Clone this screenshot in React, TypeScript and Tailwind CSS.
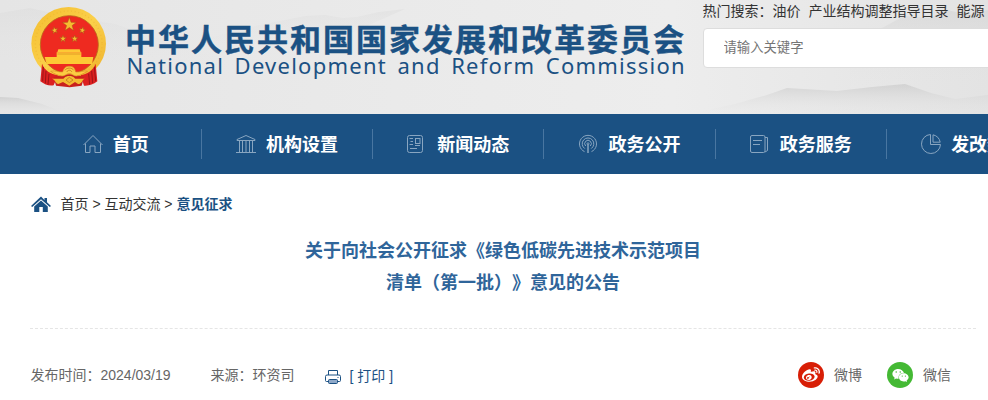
import type { ReactNode } from 'react';
import { FaWeibo, FaWeixin } from 'react-icons/fa';

interface NavItem {
  label: string;
  icon: ReactNode;
}

const star = (cx: number, cy: number, r: number, turn = 0) => {
  const points: string[] = [];
  for (let i = 0; i < 10; i++) {
    const radius = i % 2 === 0 ? r : r * 0.4;
    const angle = (i * 36 - 90 + turn) * (Math.PI / 180);
    points.push(`${(cx + radius * Math.cos(angle)).toFixed(1)},${(cy + radius * Math.sin(angle)).toFixed(1)}`);
  }
  return points.join(' ');
};

const navItems: NavItem[] = [
  {
    label: '首页',
    icon: <path d="M.5 11 10 1.5 19.5 11M2.500 9.500v9h4.500V12h5v6.500h5.500v-9" />,
  },
  {
    label: '机构设置',
    icon: <path d="M1 5.500 10 1.500l9 4v1H1zM3.500 7v11M6.500 7v11M10 7v11M13.500 7v11M16.500 7v11M0 18.500h20" />,
  },
  {
    label: '新闻动态',
    icon: (
      <>
        <rect x=".5" y="1.500" width="15" height="17" rx="2" />
        <rect x="8.500" y="4.500" width="4.500" height="5" />
        <path d="M2.500 4.500h3.500M3.500 7.500H6M2.500 10.500H6M8 11.500h5M3 14.500h7" />
      </>
    ),
  },
  {
    label: '政务公开',
    icon: (
      <>
        <path d="M5.500 17.600a8.500 8.500 0 1 1 7 0" />
        <path d="M5.800 14.600a5.800 5.800 0 1 1 6.400 0M6.700 12a3.300 3.300 0 1 1 4.600 0" />
        <circle cx="9" cy="9.800" r="1" />
        <path d="M9 10.500V19" strokeWidth="1.500" />
      </>
    ),
  },
  {
    label: '政务服务',
    icon: (
      <>
        <rect x=".5" y="1.500" width="14.500" height="17" rx="1.500" />
        <path d="M3 6.500h9M3 10.500h7M15 3.500h2.500v13L15 18" />
      </>
    ),
  },
  {
    label: '发改数据',
    icon: (
      <>
        <path d="M9.500.5a9.500 9.500 0 1 0 10 10h-10z" />
        <path d="M12 .8a9.500 9.500 0 0 1 7.200 7.400H12z" />
      </>
    ),
  },
];

function Emblem() {
  return (
    <svg className="h-[84px] w-[78px] shrink-0" viewBox="30 15 234 252">
      <defs>
        <linearGradient id="gold" x1="0" y1="0" x2="1" y2="1">
          <stop offset="0" stopColor="#f3bd2f" />
          <stop offset=".5" stopColor="#fbd04a" />
          <stop offset="1" stopColor="#eeb02a" />
        </linearGradient>
      </defs>
      <ellipse cx="146" cy="131" rx="112" ry="110" fill="url(#gold)" />
      <ellipse cx="146" cy="131" rx="100" ry="98" fill="none" stroke="#e5a324" strokeWidth="4" strokeDasharray="3 8" opacity=".3" />
      <circle cx="148" cy="134" r="87" fill="#ee2a20" stroke="#b9691b" strokeWidth="2.500" />
      <g fill="#f5bb31" stroke="#a94a16" strokeWidth="1.500">
        <polygon points={star(148, 74, 22)} />
        <polygon points={star(104, 91, 11, -12)} />
        <polygon points={star(187, 91, 11, 12)} />
        <polygon points={star(129, 116, 11)} />
        <polygon points={star(164, 116, 11)} />
      </g>
      <g fill="#fdc935">
        <path d="M115 148h64l3 9h-70z" />
        <path d="M110 157h74v14h36l-4 21H80l-6-21h36z" />
      </g>
      <path d="M112 162h70" stroke="#d68422" strokeWidth="2" />
      <path d="M66 191c7 20 27 32 48 34l-13 31c-15 2-27-2-40-12z" fill="#dc2020" />
      <path d="M227 191c-7 20-27 32-45 34l10 32c15 1 27-3 40-13z" fill="#dc2020" />
      <path d="M70 201l-2 43m10-31-2 37m11-28-3 32m139-53 4 43m-12-31 3 36m-12-28 3 33" stroke="#9e1518" strokeWidth="3" fill="none" />
      <path d="M101 232c30-12 66-12 91 0l-7 25-36 5-41-5z" fill="#c9211d" />
      <path d="M96 236h34c3 0 4-8 18-8s16 8 18 8h28c-8 2-7 16-20 16l-9-6-17 11-19-11-14 6c-8-2-9-12-19-16z" fill="#f4bb32" />
      <path d="M92 214c14-4 23 3 36 2 5-15 11-17 20-17s16 3 19 17c14 2 23-6 36-2-12 5-22 14-34 14-10 0-11-7-21-7s-12 7-22 7-24-7-34-14z" fill="#fccc43" stroke="#d98e24" strokeWidth="2" />
      <path d="M135 211c4-9 22-9 26 0M140 216c4-7 12-7 16 0M138 240l10-8 11 8-11 8z" fill="none" stroke="#c77a20" strokeWidth="2.500" />
    </svg>
  );
}

function Mountains() {
  return (
    <svg className="absolute inset-0 h-full w-full" viewBox="0 0 988 114" preserveAspectRatio="none">
      <defs>
        <linearGradient id="sky" x1="0" y1="0" x2="1" y2="0">
          <stop offset="0" stopColor="#e5e5e5" />
          <stop offset=".4" stopColor="#eaeaea" />
          <stop offset=".68" stopColor="#ededed" />
          <stop offset="1" stopColor="#e3e3e3" />
        </linearGradient>
        <linearGradient id="ridge" x1="0" y1="0" x2="0" y2="1">
          <stop offset="0" stopColor="#c9c9c9" stopOpacity=".7" />
          <stop offset="1" stopColor="#e6e6e6" stopOpacity="0" />
        </linearGradient>
      </defs>
      <path fill="url(#sky)" d="M0 0h988v114H0z" />
      <g fill="url(#ridge)">
        <path d="M0 97l18 1 24 6 18 7 12 3H0z" />
        <path opacity=".25" d="M0 13l30-5 35 8 50 8 60 20 70 22H0z" />
        <path opacity=".3" d="M210 38l40-11 25-5 30-6 20-1 18 3 14-1 22-5 26-3-65 29-100 12z" />
        <path d="M690 114l45-10 32-9 20-7 50 3 35-4 33-3 26 9 24 6 33-4v19z" />
        <path opacity=".5" d="M850 44l32-16 22-12 25 2 18-8 22 5 19-5v82H850z" />
      </g>
    </svg>
  );
}

function PrinterIcon() {
  return (
    <svg className="h-4 w-4" viewBox="0 0 16 16" fill="none" stroke="#1b5183">
      <path d="M3.500 6V1.500h9V6M3 12.500H1.500A1 1 0 0 1 .5 11.500v-4a1.500 1.500 0 0 1 1.500-1.500h12a1.500 1.500 0 0 1 1.500 1.500v4a1 1 0 0 1-1 1H13" />
      <rect x="3.500" y="10.500" width="9" height="4" rx="1" fill="#8fa9c9" />
      <path d="M12.500 8.500h1" />
    </svg>
  );
}

export default function App() {
  return (
    <div className="h-[400px] w-full overflow-hidden bg-white text-sm text-[#333] [font-family:'Liberation_Sans','Noto_Sans_CJK_SC',sans-serif] [text-spacing-trim:space-all]">
      {/* Header */}
      <header className="relative h-[114px] overflow-hidden">
        <Mountains />
        <div className="relative flex pl-[30px]">
          <div className="flex w-[672.500px] shrink-0 pt-[5px]">
            <Emblem />
            <div className="ml-[17px] pt-[17px] whitespace-nowrap text-[#1b5183]">
              <h1 className="text-[31px] leading-[31px] font-bold tracking-[2px] [-webkit-text-stroke:0.4px_#1b5183] [font-family:'Noto_Sans_CJK_SC',sans-serif]">
                中华人民共和国国家发展和改革委员会
              </h1>
              <p className="ml-[1.500px] text-[22px] leading-[24px] tracking-[1.250px] [word-spacing:3.500px] [font-family:'Noto_Sans',sans-serif]">
                National Development and Reform Commission
              </p>
            </div>
          </div>
          <div className="w-[400px] shrink-0">
            <div className="flex h-[28px] items-start gap-2 pt-px leading-5 whitespace-nowrap">
              <span className="-mr-2">热门搜索：</span>
              <a>油价</a>
              <a>产业结构调整指导目录</a>
              <a>能源</a>
            </div>
            <input
              className="block h-10 w-full rounded border border-[#ddd] bg-white px-5 pb-0.5 text-[13.333px] outline-none placeholder:text-[#757575]"
              placeholder="请输入关键字"
            />
          </div>
        </div>
      </header>

      {/* Navigation */}
      <nav className="flex h-[60px] items-center overflow-hidden bg-[#1b5183] pl-[30.500px]">
        {navItems.map((item) => (
          <a
            key={item.label}
            className="flex h-[30px] w-[171.300px] shrink-0 items-center justify-center gap-2.5 border-r border-[#4976a1] text-lg font-bold whitespace-nowrap text-white"
          >
            <svg className="h-5 w-5 shrink-0" viewBox="0 0 20 20" fill="none" stroke="#89a6c1" strokeWidth="1">
              {item.icon}
            </svg>
            <span className="pt-px">{item.label}</span>
          </a>
        ))}
      </nav>

      {/* Breadcrumb */}
      <div className="flex h-[60px] items-center pl-[30.500px]">
        <svg className="mr-[10px] h-[17px] w-5" viewBox="0 0 20 17" fill="#1b5183">
          <path d="M10 .5 13.500 4V2h2.500v4.300l4 3.600-1.200 1.200L10 3.300 1.200 11.100 0 9.900z" />
          <path d="M10 4.600l6.800 6V16h-5v-5H8.300v5H3.200v-5.400z" />
        </svg>
        <span className="whitespace-pre">首页 &gt; 互动交流 &gt; </span>
        <span className="font-bold text-[#1b5183]">意见征求</span>
      </div>

      {/* Article title */}
      <main className="ml-[30px] w-[946px]">
        <h2 className="h-[95px] border-b border-dashed border-[#e5e5e5] pt-px text-center text-lg leading-8 font-bold text-[#2f659a]">
          关于向社会公开征求《绿色低碳先进技术示范项目
          <br />
          清单（第一批）》意见的公告
        </h2>

        <div className="flex h-[92px] items-center pl-[.5px] text-[#666]">
          <span className="w-[180px]">发布时间：2024/03/19</span>
          <span className="w-[114px]">来源：环资司</span>
          <span className="flex items-center gap-[9px] pt-[3px] text-[#1b5183]">
            <PrinterIcon />
            <span className="pb-0.5">[ 打印 ]</span>
          </span>
          <div className="ml-auto flex items-center gap-[25px] pr-[25px]">
            <span className="flex items-center gap-[10px]">
              <i className="flex h-[26px] w-[26px] items-center justify-center rounded-full bg-[#d81e06] text-white">
                <FaWeibo size={18} />
              </i>
              微博
            </span>
            <span className="flex items-center gap-[10px]">
              <i className="flex h-[26px] w-[26px] items-center justify-center rounded-full bg-[#44b934] text-white">
                <FaWeixin size={17} />
              </i>
              微信
            </span>
          </div>
        </div>
      </main>
    </div>
  );
}
